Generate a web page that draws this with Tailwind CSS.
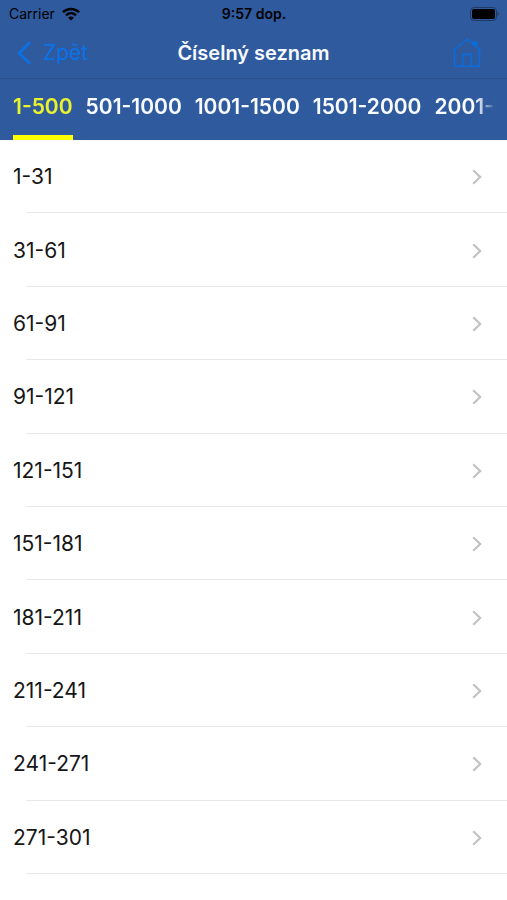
<!DOCTYPE html>
<html lang="cs">
<head>
<meta charset="utf-8">
<meta name="viewport" content="width=device-width, initial-scale=1">
<title>Číselný seznam</title>
<script src="https://cdn.jsdelivr.net/npm/@tailwindcss/browser@4"></script>
</head>
<body class="flex min-h-screen flex-col overflow-x-hidden bg-white font-['Inter','Liberation_Sans',sans-serif] text-black">
<header class="bg-[#2f5a9e]">
  <div class="grid h-[27px] grid-cols-3 items-center pr-2 pl-[9px] text-[14px] leading-5">
    <div class="flex items-center gap-[7px]">
      <span>Carrier</span>
      <svg class="h-[14px] w-[18px]" viewBox="0 0 18 14" fill="none" stroke="currentColor" stroke-width="2.5" aria-hidden="true">
        <path d="M1 5.2C5.6.8 12.4.8 17 5.2"/>
        <path d="M4 8.3c2.9-2.7 7.1-2.7 10 0"/>
        <path d="M9 13.6 6.1 10.7c1.7-1.5 4.1-1.5 5.8 0z" fill="currentColor" stroke="none"/>
      </svg>
    </div>
    <div class="text-center font-semibold">9:57 dop.</div>
    <svg class="h-[14px] w-[29px] justify-self-end" viewBox="0 0 29 14" aria-hidden="true">
      <rect x=".5" y=".5" width="26" height="13" rx="3.5" fill="none" stroke="#000" stroke-opacity=".35"/>
      <rect x="2" y="2" width="23" height="10" rx="2" fill="#000"/>
      <path d="M27.5 4.8c1.6.7 1.6 3.7 0 4.4z" fill="#000" fill-opacity=".4"/>
    </svg>
  </div>
  <div class="grid h-[52px] grid-cols-[1fr_auto_1fr] items-center border-b border-[#2b5190] px-[17px]">
    <button type="button" class="flex items-center gap-3 justify-self-start text-[21px] leading-6 text-[#0b72e6]">
      <svg class="h-6 w-[14px]" viewBox="0 0 14 24" fill="none" stroke="currentColor" stroke-width="2.6" stroke-linecap="round" stroke-linejoin="round" aria-hidden="true"><path d="M12.3 2 2 12l10.3 10"/></svg>
      <span>Zpět</span>
    </button>
    <h1 class="text-[20px] leading-6 font-semibold text-[#f8fbff]">Číselný seznam</h1>
    <button type="button" aria-label="Domů" class="justify-self-end pr-2 text-[#0b6cdc]">
      <svg class="h-[30px] w-[30px]" viewBox="0 0 30 30" fill="none" stroke="currentColor" stroke-width="1.6" stroke-linejoin="round" aria-hidden="true">
        <path d="M1 13 15 1l14 12"/>
        <path d="M2.6 11.8V28.2h24.8V11.8"/>
        <path d="M20.6 5.8V4h4v5.2l-4-3.4z" fill="currentColor"/>
        <path d="M10.8 28.2V16.4h8.4v11.8"/>
      </svg>
    </button>
  </div>
  <nav aria-label="Rozsahy" class="mr-[11px] h-[61px] overflow-hidden [mask-image:linear-gradient(to_right,#000_calc(100%-20px),transparent)]">
    <div class="flex h-full gap-[13px] pl-[13px] text-[21px] leading-6 font-semibold whitespace-nowrap text-[#f8fbff]">
      <a href="#" aria-current="page" class="border-b-5 border-[#ffff00] pt-4 text-[#eaf22e]">1-500</a>
      <a href="#" class="pt-4">501-1000</a>
      <a href="#" class="pt-4">1001-1500</a>
      <a href="#" class="pt-4">1501-2000</a>
      <a href="#" class="pt-4">2001-2500</a>
    </div>
  </nav>
</header>
<main class="flex flex-1 flex-col pb-[26px]">
  <ul id="list" class="grid flex-1 auto-rows-fr text-[21px] leading-6 text-[#161616]"></ul>
</main>
<template id="row">
  <li class="relative flex min-h-[60px] after:absolute after:right-0 after:bottom-0 after:left-[26px] after:h-px after:bg-[#e9e9eb]">
    <a href="#" class="flex flex-1 items-center justify-between pt-px pr-[25px] pl-[13px]">
      <span></span>
      <svg class="h-4 w-[10px]" viewBox="0 0 10 16" fill="none" stroke="#c2c2c5" stroke-width="2.2" aria-hidden="true"><path d="M1.2 1.2 8.2 8l-7 6.8"/></svg>
    </a>
  </li>
</template>
<script>
  const list = document.getElementById('list');
  const row = document.getElementById('row');
  ['1-31', '31-61', '61-91', '91-121', '121-151', '151-181', '181-211', '211-241', '241-271', '271-301'].forEach((range) => {
    const item = row.content.cloneNode(true);
    item.querySelector('span').textContent = range;
    list.append(item);
  });
</script>
</body>
</html>
